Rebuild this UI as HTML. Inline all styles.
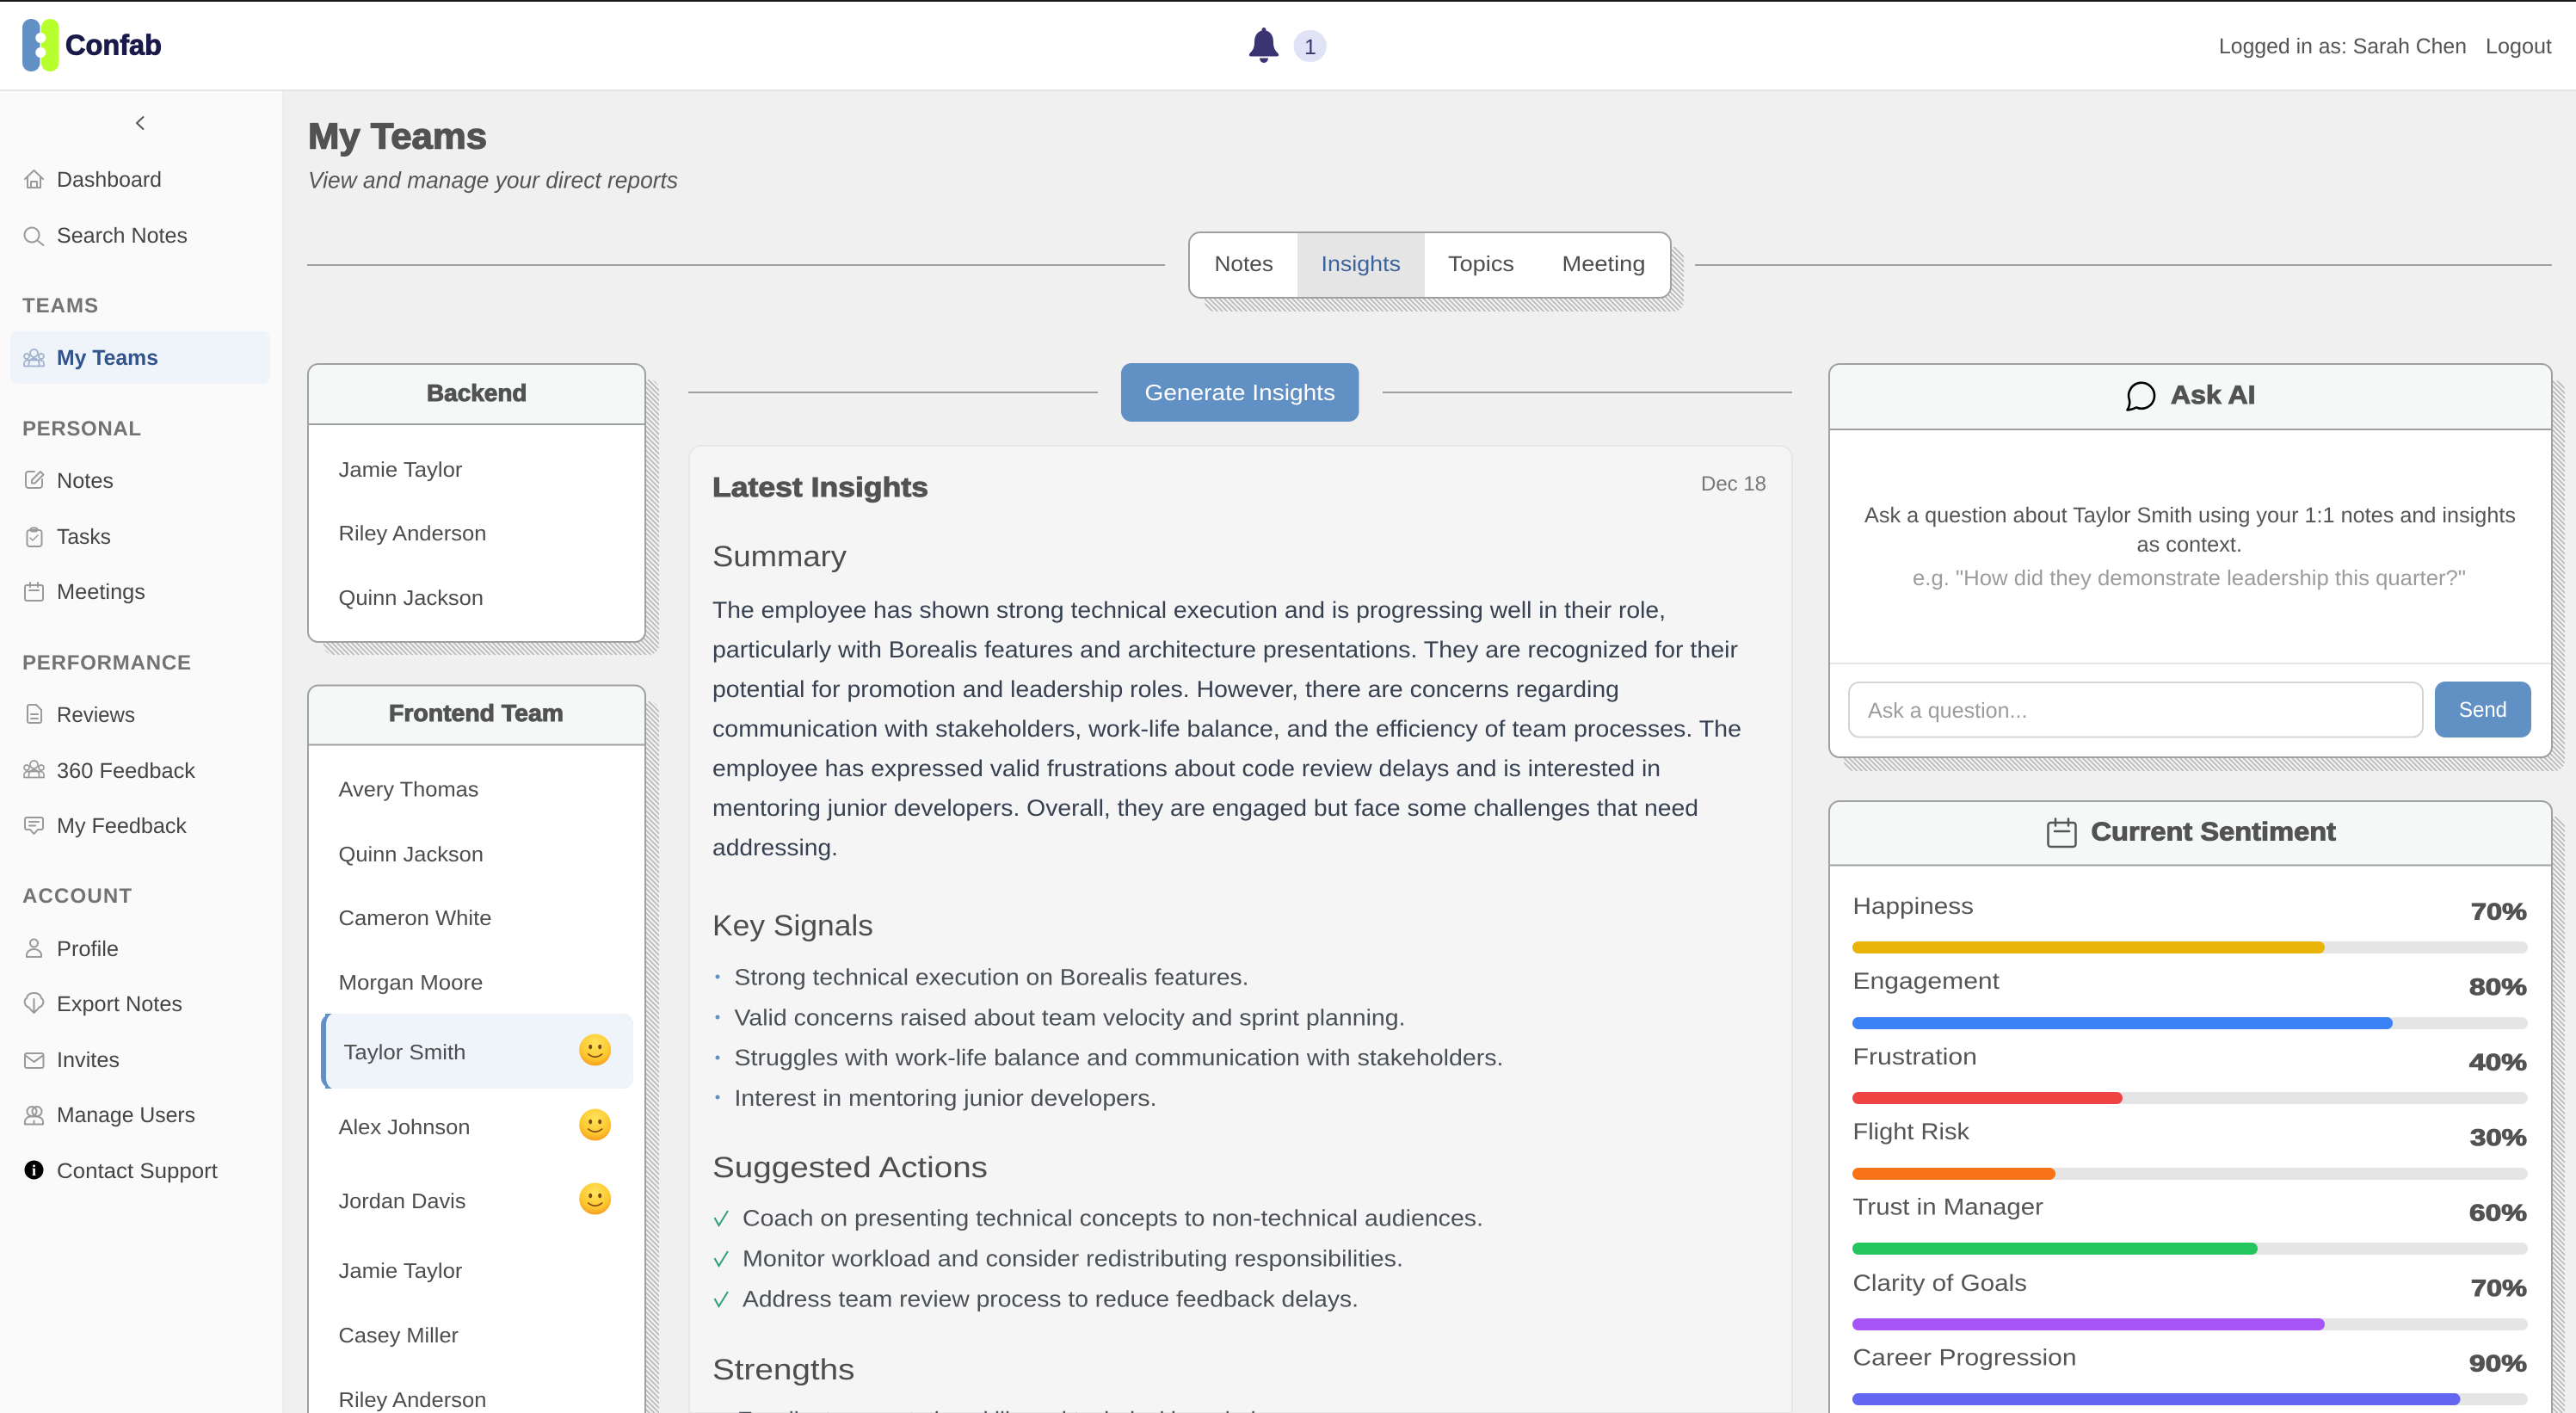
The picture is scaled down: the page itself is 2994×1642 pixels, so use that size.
<!DOCTYPE html>
<html lang="en"><head><meta charset="utf-8"><title>My Teams</title>
<style>
html,body{margin:0;padding:0;background:#f0f0f0;width:2994px;height:1642px;overflow:hidden}
svg{display:block}
text{font-family:"Liberation Sans",sans-serif;text-rendering:geometricPrecision;white-space:pre}
.nav{font-size:25px;fill:#454545}
.sec{font-size:24px;font-weight:700;fill:#737373}
.name{font-size:24.5px;fill:#4d4d4d}
.hv{font-weight:700;fill:#525252;stroke:#525252;stroke-width:1px}
.p{font-size:27px;fill:#374151}
.li{font-size:26.5px;fill:#4b5057}
.h3{font-size:34px;fill:#4d4d4d}
.lab{font-size:27px;fill:#555}
.val{font-size:27px}
.tab{font-size:25px;fill:#4d4d4d}
.ic{fill:none;stroke:var(--s,#9a9a9a);stroke-width:2;stroke-linecap:round;stroke-linejoin:round}
</style></head>
<body>
<svg xmlns="http://www.w3.org/2000/svg" width="2994" height="1642" viewBox="0 0 2994 1642">
<defs>
<pattern id="h" width="4" height="4" patternUnits="userSpaceOnUse" patternTransform="rotate(-45)"><rect width="1.400" height="4" fill="#b0b0b0"/></pattern>
<radialGradient id="em" cx="50%" cy="30%" r="75%"><stop offset="0" stop-color="#ffe45c"/><stop offset=".65" stop-color="#fdc62f"/><stop offset="1" stop-color="#f5961a"/></radialGradient>
<g id="smile"><circle r="18.500" fill="url(#em)"/><ellipse cx="-5.500" cy="-3.500" rx="2" ry="2.800" fill="#7a4a12"/><ellipse cx="5.500" cy="-3.500" rx="2" ry="2.800" fill="#7a4a12"/><path d="M-8 5 Q0 11.500 8 5" fill="none" stroke="#7a4a12" stroke-width="1.600" stroke-linecap="round"/></g>
<g id="team" class="ic" style="stroke-width:1.700"><circle cx="39.500" cy="410.500" r="4.500"/><circle cx="31" cy="414" r="3"/><circle cx="48" cy="414" r="3"/><path d="M28 425.500h23v-3a4 4 0 0 0-4-4h-15a4 4 0 0 0-4 4zM33.500 425.500v-3a6 6 0 0 1 12 0v3"/></g>
</defs>
<rect width="2994" height="1642" fill="#f0f0f0"/>

<!-- header -->
<rect width="2994" height="104" fill="#fff"/>
<rect width="2994" height="2" fill="#1a1a1a"/>
<rect y="104" width="2994" height="2" fill="#e5e5e5"/>
<rect x="26" y="22" width="20.500" height="61" rx="10" fill="#6190c4"/>
<rect x="48" y="22" width="20.500" height="61" rx="10" fill="#b8ff2e"/>
<circle cx="47.300" cy="44" r="6" fill="#fff"/><circle cx="47.300" cy="61" r="6" fill="#fff"/>
<text x="76" y="63.500" font-size="33" font-weight="700" fill="#1a1a4a" stroke="#1a1a4a" stroke-width=".9" textLength="112" lengthAdjust="spacingAndGlyphs">Confab</text>

<path fill="#3b3472" d="M1469 32c1.700 0 2.500 1.500 2.500 3.500c6.500 2 8.500 7.500 8.500 13.500c0 6 1.500 9 5 12.500c1.800 1.800 1.500 4-1 4h-30c-2.500 0-2.800-2.200-1-4c3.500-3.500 5-6.500 5-12.500c0-6 2-11.500 8.500-13.500c0-2 .8-3.500 2.500-3.500zM1464 67.500h10a5 5.500 0 0 1-10 0z"/>
<rect x="1503.500" y="35" width="38.500" height="37" rx="18.500" fill="#e0e2f5"/>
<text x="1523" y="63" font-size="25" fill="#3b3472" text-anchor="middle">1</text>

<text x="2579" y="62" font-size="25" fill="#555" textLength="288" lengthAdjust="spacingAndGlyphs">Logged in as: Sarah Chen</text>
<text x="2889" y="62" font-size="25" fill="#555" textLength="77" lengthAdjust="spacingAndGlyphs">Logout</text>

<!-- sidebar -->
<rect y="106" width="328" height="1536" fill="#fafafa"/>
<rect x="328" y="106" width="2" height="1536" fill="#ebebeb"/>
<path d="M166.500 136L159 143l7.500 7" fill="none" stroke="#555" stroke-width="2" stroke-linecap="round" stroke-linejoin="round"/>

<path class="ic" d="M29 208L39.500 198 50 208M32 205v13h15v-13M36 218v-7h7v7"/>
<text class="nav" x="66" y="217" textLength="122" lengthAdjust="spacingAndGlyphs">Dashboard</text>
<g class="ic"><circle cx="37" cy="273" r="8.500"/><path d="M43.500 279.500L50.500 285"/></g>
<text class="nav" x="66" y="282" textLength="152" lengthAdjust="spacingAndGlyphs">Search Notes</text>

<text class="sec" x="26" y="363" textLength="88" lengthAdjust="spacing">TEAMS</text>
<rect x="12" y="385" width="302" height="61" rx="8" fill="#eff4fb"/>
<use href="#team" style="--s:#9fb0cc"/>
<text x="66" y="424" font-size="25" font-weight="700" fill="#33548a" textLength="118" lengthAdjust="spacingAndGlyphs">My Teams</text>

<text class="sec" x="26" y="506" textLength="138" lengthAdjust="spacing">PERSONAL</text>
<path class="ic" d="M40 548h-7a3 3 0 0 0-3 3v13a3 3 0 0 0 3 3h13a3 3 0 0 0 3-3v-7M37 558v3.500h3.500L50.500 551.500 47 548z"/>
<text class="nav" x="66" y="567" textLength="66" lengthAdjust="spacingAndGlyphs">Notes</text>
<g class="ic"><rect x="31.500" y="616" width="17" height="19" rx="3"/><rect x="35.500" y="613.500" width="8" height="4" rx="2"/><path style="stroke-width:1.500" d="M35 625l3 3 6-6"/></g>
<text class="nav" x="66" y="632" textLength="63" lengthAdjust="spacingAndGlyphs">Tasks</text>
<g class="ic"><rect x="29" y="680" width="21" height="18" rx="2"/><path d="M35 677v5M44 677v5M34 686h11"/></g>
<text class="nav" x="66" y="696" textLength="103" lengthAdjust="spacingAndGlyphs">Meetings</text>

<text class="sec" x="26" y="778" textLength="196" lengthAdjust="spacing">PERFORMANCE</text>
<path class="ic" d="M34 819h8l6 6v13a2 2 0 0 1-2 2H34a2 2 0 0 1-2-2V821a2 2 0 0 1 2-2zM36 830h8M36 835h8"/>
<text class="nav" x="66" y="839" textLength="91" lengthAdjust="spacingAndGlyphs">Reviews</text>
<g transform="translate(0,478)"><use href="#team"/></g>
<text class="nav" x="66" y="904" textLength="161" lengthAdjust="spacingAndGlyphs">360 Feedback</text>
<path class="ic" d="M31 950h17a2 2 0 0 1 2 2v10a2 2 0 0 1-2 2h-4l-4.500 5-4.500-5h-4a2 2 0 0 1-2-2v-10a2 2 0 0 1 2-2zM34 955h11M34 959.500h7"/>
<text class="nav" x="66" y="968" textLength="151" lengthAdjust="spacingAndGlyphs">My Feedback</text>

<text class="sec" x="26" y="1049" textLength="127" lengthAdjust="spacing">ACCOUNT</text>
<g class="ic"><circle cx="39.500" cy="1096" r="4.500"/><path d="M31 1112v-2a8.500 7 0 0 1 17 0v2z"/></g>
<text class="nav" x="66" y="1111" textLength="72" lengthAdjust="spacingAndGlyphs">Profile</text>
<path class="ic" d="M34 1171C28 1169 27 1162 31 1160 32 1155 36 1154 39.500 1154 43 1154 47 1155 48 1160 52 1162 51 1169 45 1171M39.500 1161v16M35 1172.500l4.500 4.500 4.500-4.500"/>
<text class="nav" x="66" y="1175" textLength="146" lengthAdjust="spacingAndGlyphs">Export Notes</text>
<g class="ic"><rect x="29" y="1224" width="21.500" height="17" rx="2"/><path d="M29.500 1226.500L39.500 1234 50 1226.500"/></g>
<text class="nav" x="66" y="1240" textLength="73" lengthAdjust="spacingAndGlyphs">Invites</text>
<g class="ic"><circle cx="37" cy="1291.500" r="5.500"/><circle cx="43" cy="1291.500" r="5.500"/><path d="M29 1306.500v-3a7 6 0 0 1 7-6h7a8 6 0 0 1 7 6v3zM39.500 1306.500v-4"/></g>
<text class="nav" x="66" y="1304" textLength="161" lengthAdjust="spacingAndGlyphs">Manage Users</text>
<circle cx="39.500" cy="1359.500" r="11" fill="#000"/>
<text x="39.500" y="1366" font-size="18" font-weight="700" fill="#fff" text-anchor="middle" style="font-family:'Liberation Serif',serif">i</text>
<text class="nav" x="66" y="1369" textLength="187" lengthAdjust="spacingAndGlyphs">Contact Support</text>

<!-- title -->
<text class="hv" x="358" y="172.500" font-size="42" textLength="208" lengthAdjust="spacingAndGlyphs" style="stroke-width:1.400px">My Teams</text>
<text x="358" y="218.500" font-size="27" font-style="italic" fill="#555" textLength="430" lengthAdjust="spacingAndGlyphs">View and manage your direct reports</text>

<!-- tabs -->
<rect x="357" y="307" width="997" height="2" fill="#a0a0a0"/>
<rect x="1970" y="307" width="996" height="2" fill="#a0a0a0"/>
<rect x="1400" y="287" width="557" height="75" rx="12" fill="url(#h)"/>
<rect x="1382" y="270" width="560" height="76" rx="13" fill="#fff"/>
<rect x="1508" y="270" width="148" height="76" fill="#e5e5e5"/>
<rect x="1382" y="270" width="560" height="76" rx="13" fill="none" stroke="#a0a0a0" stroke-width="2"/>
<text class="tab" x="1411.500" y="315" textLength="68.500" lengthAdjust="spacingAndGlyphs">Notes</text>
<text class="tab" x="1535.500" y="315" textLength="92.500" lengthAdjust="spacingAndGlyphs" style="fill:#3b649e">Insights</text>
<text class="tab" x="1683" y="315" textLength="77" lengthAdjust="spacingAndGlyphs">Topics</text>
<text class="tab" x="1815.500" y="315" textLength="97" lengthAdjust="spacingAndGlyphs">Meeting</text>

<!-- backend card -->
<rect x="376" y="441" width="390" height="320" rx="12" fill="url(#h)"/>
<rect x="358" y="423" width="392" height="323" rx="12" fill="#fff"/>
<path d="M358 493V435a12 12 0 0 1 12-12H738a12 12 0 0 1 12 12V493z" fill="#f4f9f7"/>
<rect x="358" y="492" width="392" height="2" fill="#a0a0a0"/>
<rect x="358" y="423" width="392" height="323" rx="12" fill="none" stroke="#a0a0a0" stroke-width="2"/>
<text class="hv" x="496" y="466" font-size="27.500" textLength="116.500" lengthAdjust="spacingAndGlyphs">Backend</text>
<text class="name" x="393.500" y="554" textLength="144" lengthAdjust="spacingAndGlyphs">Jamie Taylor</text>
<text class="name" x="393.500" y="628" textLength="172" lengthAdjust="spacingAndGlyphs">Riley Anderson</text>
<text class="name" x="393.500" y="703" textLength="168.500" lengthAdjust="spacingAndGlyphs">Quinn Jackson</text>

<!-- frontend card -->
<path d="M388 815H754a12 12 0 0 1 12 12V1642H376V827a12 12 0 0 1 12-12z" fill="url(#h)"/>
<path d="M358 1642V808.500a12 12 0 0 1 12-12H738a12 12 0 0 1 12 12V1642z" fill="#fff"/>
<path d="M358 865.500V808.500a12 12 0 0 1 12-12H738a12 12 0 0 1 12 12V865.500z" fill="#f4f9f7"/>
<rect x="358" y="864.500" width="392" height="2" fill="#a0a0a0"/>
<path d="M358 1642V808.500a12 12 0 0 1 12-12H738a12 12 0 0 1 12 12V1642" fill="none" stroke="#a0a0a0" stroke-width="2"/>
<text class="hv" x="452" y="838" font-size="27.500" textLength="203" lengthAdjust="spacingAndGlyphs">Frontend Team</text>
<text class="name" x="393.500" y="925.500" textLength="163" lengthAdjust="spacingAndGlyphs">Avery Thomas</text>
<text class="name" x="393.500" y="1001" textLength="168.500" lengthAdjust="spacingAndGlyphs">Quinn Jackson</text>
<text class="name" x="393.500" y="1075" textLength="178" lengthAdjust="spacingAndGlyphs">Cameron White</text>
<text class="name" x="393.500" y="1150" textLength="168" lengthAdjust="spacingAndGlyphs">Morgan Moore</text>
<rect x="373" y="1178" width="363" height="87" rx="13" fill="#6190c4"/>
<path d="M379 1178H723a13 13 0 0 1 13 13v61a13 13 0 0 1-13 13H379z" fill="#eff4fb"/>
<path d="M378 1178h8a10 13 0 0 0-7 13v61a10 13 0 0 0 7 13h-8z" fill="#6190c4"/>
<text class="name" x="399.500" y="1231" textLength="142" lengthAdjust="spacingAndGlyphs">Taylor Smith</text>
<use href="#smile" x="691.700" y="1220"/>
<text class="name" x="393.500" y="1318" textLength="153" lengthAdjust="spacingAndGlyphs">Alex Johnson</text>
<use href="#smile" x="691.700" y="1307"/>
<text class="name" x="393.500" y="1404" textLength="148" lengthAdjust="spacingAndGlyphs">Jordan Davis</text>
<use href="#smile" x="691.700" y="1393"/>
<text class="name" x="393.500" y="1485" textLength="144" lengthAdjust="spacingAndGlyphs">Jamie Taylor</text>
<text class="name" x="393.500" y="1560" textLength="139.500" lengthAdjust="spacingAndGlyphs">Casey Miller</text>
<text class="name" x="393.500" y="1635" textLength="172" lengthAdjust="spacingAndGlyphs">Riley Anderson</text>

<!-- generate -->
<rect x="800" y="455" width="476" height="2" fill="#a0a0a0"/>
<rect x="1607" y="455" width="476" height="2" fill="#a0a0a0"/>
<rect x="1303" y="422" width="276.500" height="68" rx="12" fill="#6190c4"/>
<text x="1330.500" y="465" font-size="26" fill="#fff" textLength="221.500" lengthAdjust="spacingAndGlyphs">Generate Insights</text>

<!-- insights -->
<path d="M801 1642V532a14 14 0 0 1 14-14H2069a14 14 0 0 1 14 14V1642z" fill="#f5f5f5" stroke="#e6e6e6" stroke-width="2"/>
<text class="hv" x="828" y="577" font-size="32" textLength="251" lengthAdjust="spacingAndGlyphs">Latest Insights</text>
<text x="1977" y="570" font-size="24" fill="#777" textLength="76" lengthAdjust="spacingAndGlyphs">Dec 18</text>
<text class="h3" x="828" y="658" textLength="156" lengthAdjust="spacingAndGlyphs">Summary</text>
<text class="p" x="828" y="718" textLength="1108" lengthAdjust="spacingAndGlyphs">The employee has shown strong technical execution and is progressing well in their role,</text>
<text class="p" x="828" y="764" textLength="1192" lengthAdjust="spacingAndGlyphs">particularly with Borealis features and architecture presentations. They are recognized for their</text>
<text class="p" x="828" y="810" textLength="1054" lengthAdjust="spacingAndGlyphs">potential for promotion and leadership roles. However, there are concerns regarding</text>
<text class="p" x="828" y="856" textLength="1196" lengthAdjust="spacingAndGlyphs">communication with stakeholders, work-life balance, and the efficiency of team processes. The</text>
<text class="p" x="828" y="902" textLength="1102" lengthAdjust="spacingAndGlyphs">employee has expressed valid frustrations about code review delays and is interested in</text>
<text class="p" x="828" y="948" textLength="1146" lengthAdjust="spacingAndGlyphs">mentoring junior developers. Overall, they are engaged but face some challenges that need</text>
<text class="p" x="828" y="994" textLength="146" lengthAdjust="spacingAndGlyphs">addressing.</text>

<text class="h3" x="828" y="1087" textLength="187" lengthAdjust="spacingAndGlyphs">Key Signals</text>
<circle cx="834" cy="1135" r="2.500" fill="#6190c4"/><text class="li" x="853.500" y="1144.500" textLength="598" lengthAdjust="spacingAndGlyphs">Strong technical execution on Borealis features.</text>
<circle cx="834" cy="1182" r="2.500" fill="#6190c4"/><text class="li" x="853.500" y="1191.500" textLength="780" lengthAdjust="spacingAndGlyphs">Valid concerns raised about team velocity and sprint planning.</text>
<circle cx="834" cy="1229" r="2.500" fill="#6190c4"/><text class="li" x="853.500" y="1238" textLength="894" lengthAdjust="spacingAndGlyphs">Struggles with work-life balance and communication with stakeholders.</text>
<circle cx="834" cy="1275" r="2.500" fill="#6190c4"/><text class="li" x="853.500" y="1285" textLength="491" lengthAdjust="spacingAndGlyphs">Interest in mentoring junior developers.</text>

<text class="h3" x="828" y="1368" textLength="320" lengthAdjust="spacingAndGlyphs">Suggested Actions</text>
<path d="M830.500 1415l5 9 10.500-17M830.500 1462l5 9 10.500-17M830.500 1509l5 9 10.500-17" fill="none" stroke="#2f9e7e" stroke-width="2"/>
<text class="li" x="863" y="1424.500" textLength="861" lengthAdjust="spacingAndGlyphs">Coach on presenting technical concepts to non-technical audiences.</text>
<text class="li" x="863" y="1471.500" textLength="768" lengthAdjust="spacingAndGlyphs">Monitor workload and consider redistributing responsibilities.</text>
<text class="li" x="863" y="1518.500" textLength="716" lengthAdjust="spacingAndGlyphs">Address team review process to reduce feedback delays.</text>

<text class="h3" x="828" y="1603" textLength="165.500" lengthAdjust="spacingAndGlyphs">Strengths</text>
<text class="li" x="857" y="1659" textLength="640" lengthAdjust="spacingAndGlyphs">Excellent presentation skills and technical knowledge.</text>

<!-- ask ai -->
<rect x="2143" y="442" width="838" height="454" rx="12" fill="url(#h)"/>
<rect x="2126" y="423" width="840" height="457" rx="12" fill="#fff"/>
<path d="M2126 499V435a12 12 0 0 1 12-12H2954a12 12 0 0 1 12 12V499z" fill="#f4f9f7"/>
<rect x="2126" y="498" width="840" height="2" fill="#a0a0a0"/>
<rect x="2126" y="423" width="840" height="457" rx="12" fill="none" stroke="#a0a0a0" stroke-width="2"/>
<path d="M2475 465A15 15 0 1 1 2483 473.500Q2478 476 2472.500 476.500 2476 471 2475 465Z" fill="none" stroke="#000" stroke-width="2.600" stroke-linejoin="round"/>
<text class="hv" x="2523" y="469" font-size="30" textLength="98.500" lengthAdjust="spacingAndGlyphs">Ask AI</text>
<text x="2167" y="607" font-size="25" fill="#555" textLength="757" lengthAdjust="spacingAndGlyphs">Ask a question about Taylor Smith using your 1:1 notes and insights</text>
<text x="2483.500" y="641" font-size="25" fill="#555" textLength="122.500" lengthAdjust="spacingAndGlyphs">as context.</text>
<text x="2223" y="680" font-size="25" fill="#9c9c9c" textLength="643" lengthAdjust="spacingAndGlyphs">e.g. "How did they demonstrate leadership this quarter?"</text>
<rect x="2127" y="770" width="838" height="2" fill="#e5e5e5"/>
<rect x="2149" y="793" width="667" height="63.500" rx="12" fill="#fff" stroke="#d4d4d4" stroke-width="2"/>
<text x="2171" y="834" font-size="25" fill="#9c9c9c" textLength="185.500" lengthAdjust="spacingAndGlyphs">Ask a question...</text>
<rect x="2830" y="792" width="112" height="65" rx="12" fill="#6190c4"/>
<text x="2858" y="833" font-size="25" fill="#fff" textLength="56" lengthAdjust="spacingAndGlyphs">Send</text>

<!-- sentiment -->
<path d="M2155 949H2969a12 12 0 0 1 12 12V1642H2143V961a12 12 0 0 1 12-12z" fill="url(#h)"/>
<path d="M2126 1642V943a12 12 0 0 1 12-12H2954a12 12 0 0 1 12 12V1642z" fill="#fff"/>
<path d="M2126 1005V943a12 12 0 0 1 12-12H2954a12 12 0 0 1 12 12V1005z" fill="#f4f9f7"/>
<rect x="2126" y="1004.500" width="840" height="2" fill="#a0a0a0"/>
<path d="M2126 1642V943a12 12 0 0 1 12-12H2954a12 12 0 0 1 12 12V1642" fill="none" stroke="#a0a0a0" stroke-width="2"/>
<g fill="none" stroke="#555" stroke-width="2.500" stroke-linecap="round"><rect x="2380.500" y="956" width="32" height="28" rx="3"/><path d="M2389 951.500v8M2404 951.500v8M2388 966h17"/></g>
<text class="hv" x="2430.500" y="976.500" font-size="30" textLength="284.500" lengthAdjust="spacingAndGlyphs">Current Sentiment</text>

<text class="lab" x="2153.500" y="1062" textLength="140.500" lengthAdjust="spacingAndGlyphs">Happiness</text>
<text class="hv val" x="2872" y="1068.500" textLength="65" lengthAdjust="spacingAndGlyphs">70%</text>
<rect x="2153" y="1094" width="785" height="14" rx="7" fill="#e5e5e5"/><rect x="2153" y="1094" width="549" height="14" rx="7" fill="#eab308"/>

<text class="lab" x="2153.500" y="1149" textLength="170.500" lengthAdjust="spacingAndGlyphs">Engagement</text>
<text class="hv val" x="2870" y="1156" textLength="67" lengthAdjust="spacingAndGlyphs">80%</text>
<rect x="2153" y="1182" width="785" height="14" rx="7" fill="#e5e5e5"/><rect x="2153" y="1182" width="628" height="14" rx="7" fill="#3b82f6"/>

<text class="lab" x="2153.500" y="1237" textLength="144.500" lengthAdjust="spacingAndGlyphs">Frustration</text>
<text class="hv val" x="2870" y="1243.500" textLength="67" lengthAdjust="spacingAndGlyphs">40%</text>
<rect x="2153" y="1269" width="785" height="14" rx="7" fill="#e5e5e5"/><rect x="2153" y="1269" width="314" height="14" rx="7" fill="#ef4444"/>

<text class="lab" x="2153.500" y="1324" textLength="135.500" lengthAdjust="spacingAndGlyphs">Flight Risk</text>
<text class="hv val" x="2871" y="1331" textLength="66" lengthAdjust="spacingAndGlyphs">30%</text>
<rect x="2153" y="1357" width="785" height="14" rx="7" fill="#e5e5e5"/><rect x="2153" y="1357" width="236" height="14" rx="7" fill="#f97316"/>

<text class="lab" x="2153.500" y="1411.500" textLength="221.500" lengthAdjust="spacingAndGlyphs">Trust in Manager</text>
<text class="hv val" x="2870" y="1418.500" textLength="67" lengthAdjust="spacingAndGlyphs">60%</text>
<rect x="2153" y="1444" width="785" height="14" rx="7" fill="#e5e5e5"/><rect x="2153" y="1444" width="471" height="14" rx="7" fill="#22c55e"/>

<text class="lab" x="2153.500" y="1500" textLength="202.500" lengthAdjust="spacingAndGlyphs">Clarity of Goals</text>
<text class="hv val" x="2872" y="1506" textLength="65" lengthAdjust="spacingAndGlyphs">70%</text>
<rect x="2153" y="1532" width="785" height="14" rx="7" fill="#e5e5e5"/><rect x="2153" y="1532" width="549" height="14" rx="7" fill="#a855f7"/>

<text class="lab" x="2153.500" y="1586.500" textLength="260" lengthAdjust="spacingAndGlyphs">Career Progression</text>
<text class="hv val" x="2870" y="1593.500" textLength="67" lengthAdjust="spacingAndGlyphs">90%</text>
<rect x="2153" y="1619" width="785" height="14" rx="7" fill="#e5e5e5"/><rect x="2153" y="1619" width="706.500" height="14" rx="7" fill="#6366f1"/>
</svg>
</body></html>
